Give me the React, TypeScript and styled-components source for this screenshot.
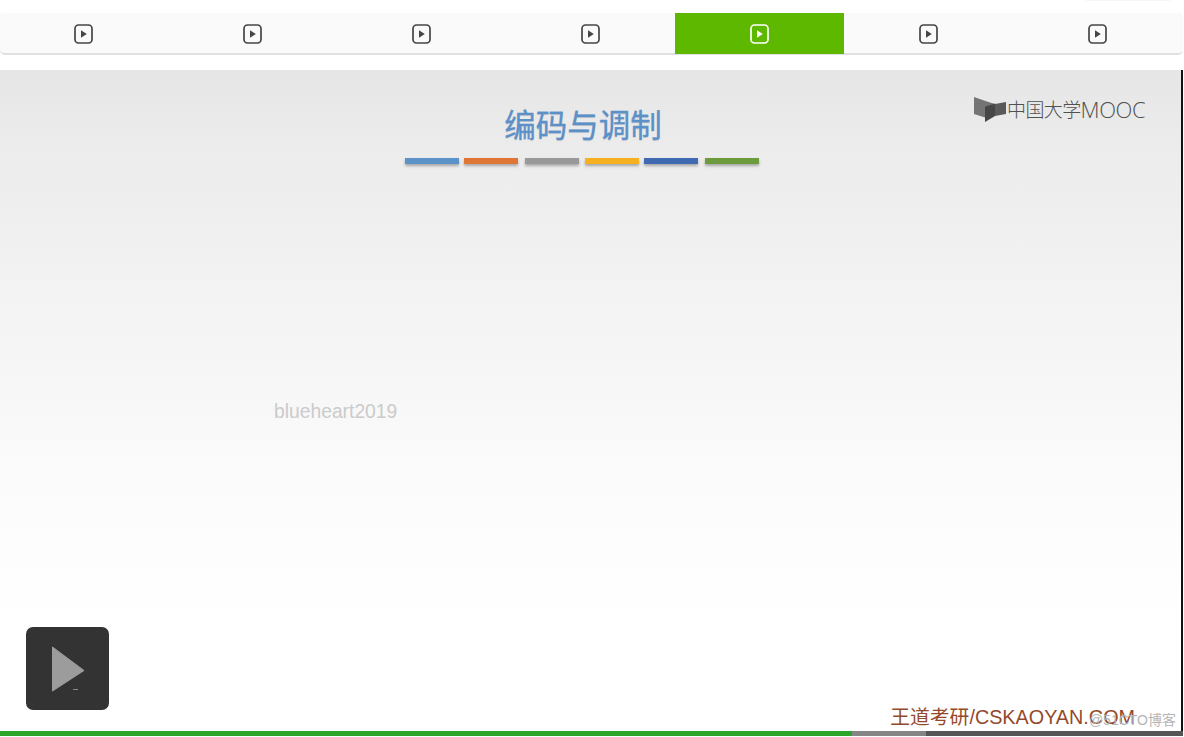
import React from 'react';
import styled, { createGlobalStyle } from 'styled-components';

const GlobalStyle = createGlobalStyle`
  html, body {
    margin: 0;
    padding: 0;
    background: #fff;
    font-family: 'Liberation Sans', 'Noto Sans CJK SC', sans-serif;
  }
`;

const Page = styled.div`
  position: relative;
  width: 1184px;
  height: 737px;
  padding-top: 13px;
  box-sizing: border-box;
  overflow: hidden;
  display: flex;
  flex-direction: column;
`;

const TopEdge = styled.div`
  position: absolute;
  left: 1086px;
  top: 0;
  width: 84px;
  height: 1px;
  background: #f6f6f6;
`;

const TabBar = styled.nav`
  width: 1183px;
  height: 42px;
  flex: none;
  display: flex;
  box-sizing: border-box;
  background: #fafafa;
  border-bottom: 2px solid #e0e0e0;
  border-radius: 3px 3px 5px 5px;
`;

const Tab = styled.div<{ $active?: boolean }>`
  flex: 0 0 169px;
  height: 41px;
  display: flex;
  align-items: center;
  justify-content: center;
  color: ${({ $active }) => ($active ? '#fff' : '#454545')};
  background: ${({ $active }) => ($active ? '#5fb800' : 'transparent')};

  &:first-child {
    margin-left: -1px;
  }
`;

const Stage = styled.main`
  position: relative;
  margin-top: 15px;
  width: 1183px;
  height: 661px;
  flex: none;
  box-sizing: border-box;
  border-right: 2px solid #111;
  background: linear-gradient(180deg, #e6e6e6 0%, #ececec 12%, #f4f4f4 38%, #fcfcfc 65%, #fff 85%);
  display: flex;
  flex-direction: column;
  align-items: center;
  padding-top: 31px;
`;

const Title = styled.h1`
  margin: 0 0 0 -15px;
  font: 400 31.5px/44px 'Noto Sans CJK SC', sans-serif;
  color: #5b91c8;
  -webkit-text-stroke: 0.3px #5b91c8;
  text-shadow: 0 1px 1px rgba(0, 0, 0, 0.12);
`;

const Stripes = styled.div`
  margin: 13px 0 0 -17px;
  display: flex;
`;

const Stripe = styled.span<{ $color: string; $gap: number }>`
  width: 54px;
  height: 6px;
  margin-left: ${({ $gap }) => $gap}px;
  background: ${({ $color }) => $color};
  box-shadow: 0 2px 3px rgba(0, 0, 0, 0.3);
`;

const Logo = styled.div`
  position: absolute;
  left: 974px;
  top: 26px;
  display: flex;
  align-items: center;
  color: #505050;
`;

const LogoText = styled.span`
  margin: -2px 0 0 1px;
  font: 300 19px/28px 'Noto Sans CJK SC', sans-serif;
  letter-spacing: -0.6px;
`;

const LogoLatin = styled.span`
  margin-top: -2px;
  font: 300 22px/28px 'Open Sans', sans-serif;
  letter-spacing: -0.4px;
`;

const UserMark = styled.div`
  position: absolute;
  left: 274px;
  top: 330px;
  font-size: 19.3px;
  line-height: 24px;
  color: #cbcbcb;
`;

const PlayButton = styled.div`
  position: absolute;
  left: 26px;
  top: 557px;
  width: 83px;
  height: 83px;
  border-radius: 7px;
  background: #333;
  display: flex;
  align-items: center;
  justify-content: center;
`;

const Dash = styled.span`
  position: absolute;
  left: 47px;
  top: 62px;
  width: 5px;
  height: 1px;
  background: #888;
`;

const Credit = styled.div`
  position: absolute;
  right: 46px;
  bottom: 0;
  font-size: 19.8px;
  line-height: 28px;
  color: #934a2b;
`;

const Stamp = styled.div`
  position: absolute;
  right: 5px;
  bottom: 1px;
  font-size: 14px;
  line-height: 20px;
  color: #b5b5b5;
`;

const Progress = styled.div`
  width: 1183px;
  height: 5px;
  flex: none;
  display: flex;
`;

const ProgressPart = styled.span<{ $color: string; $width: number }>`
  width: ${({ $width }) => $width}px;
  background: ${({ $color }) => $color};
`;

const TabIcon = () => (
  <svg width="19" height="20" viewBox="0 0 19 20" fill="none">
    <rect x="1" y="1" width="17" height="18" rx="3.5" stroke="currentColor" strokeWidth="1.7" />
    <path d="M7 6.3 12.8 10 7 13.7Z" fill="currentColor" />
  </svg>
);

const BookMark = () => (
  <svg width="32" height="28" viewBox="0 0 32 28">
    <path d="M0 1 13 5.5 21 8 11 11V21.5L0 18Z" fill="#747474" />
    <path d="M11 10.5 21 7.5V20L11 26Z" fill="#464646" />
    <path d="M21 8 32 6V18L21 20Z" fill="#5a5a5a" />
  </svg>
);

const tabs = [0, 1, 2, 3, 4, 5, 6];
const stripes = [
  { color: '#5b93c9', gap: 0 },
  { color: '#df7636', gap: 5 },
  { color: '#999999', gap: 7 },
  { color: '#f5b11f', gap: 6 },
  { color: '#3f69b0', gap: 5 },
  { color: '#6c9b3d', gap: 7 },
];

const App: React.FC = () => (
  <Page>
    <GlobalStyle />
    <TopEdge />
    <TabBar>
      {tabs.map((tab) => (
        <Tab key={tab} $active={tab === 4}>
          <TabIcon />
        </Tab>
      ))}
    </TabBar>
    <Stage>
      <Title>编码与调制</Title>
      <Stripes>
        {stripes.map(({ color, gap }) => (
          <Stripe key={color} $color={color} $gap={gap} />
        ))}
      </Stripes>
      <Logo>
        <BookMark />
        <LogoText>中国大学</LogoText>
        <LogoLatin>MOOC</LogoLatin>
      </Logo>
      <UserMark>blueheart2019</UserMark>
      <PlayButton>
        <svg width="34" height="46" viewBox="0 0 34 46">
          <path d="M1.5 1 33 24.5 1.5 45Z" fill="#9c9c9c" stroke="#9c9c9c" strokeLinejoin="round" />
        </svg>
        <Dash />
      </PlayButton>
      <Credit>王道考研/CSKAOYAN.COM</Credit>
      <Stamp>@51CTO博客</Stamp>
    </Stage>
    <Progress>
      <ProgressPart $color="#2ba52a" $width={852} />
      <ProgressPart $color="#858585" $width={74} />
      <ProgressPart $color="#555555" $width={257} />
    </Progress>
  </Page>
);

export default App;
